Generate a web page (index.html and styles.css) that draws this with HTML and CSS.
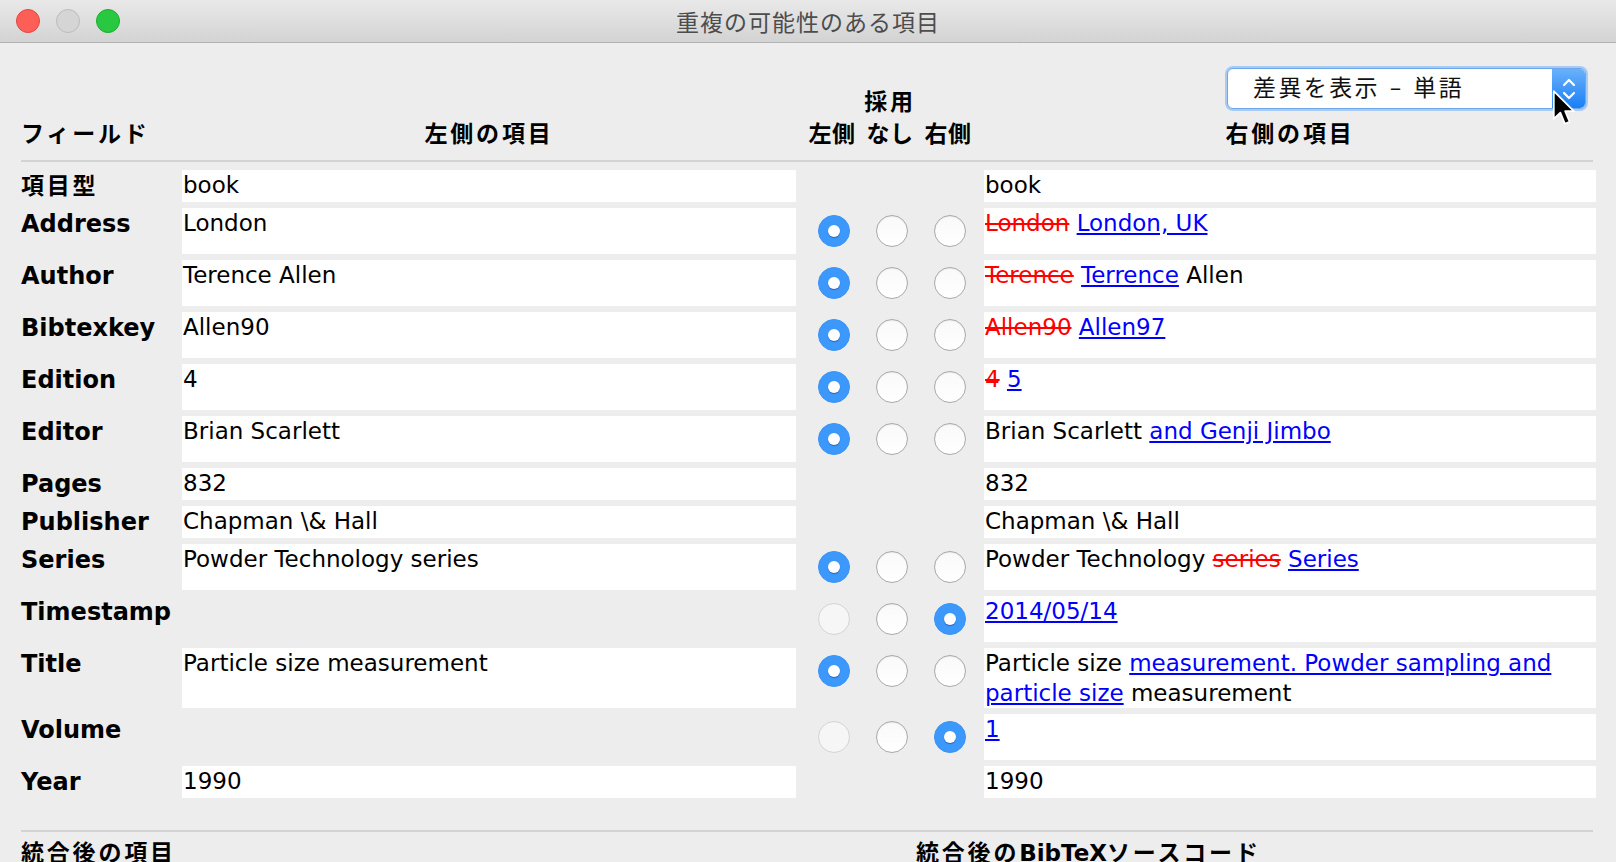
FILE: index.html
```html
<!DOCTYPE html>
<html lang="ja">
<head>
<meta charset="utf-8">
<title>重複の可能性のある項目</title>
<link rel="stylesheet" href="styles.css">
</head>
<body>
<header class="titlebar">
  <div class="lights"><span class="light red"></span><span class="light gray"></span><span class="light green"></span></div>
  <div class="title">重複の可能性のある項目</div>
  <div></div>
</header>
<main class="content">
  <div class="head">
    <div class="h-field jp">フィールド</div>
    <div class="h-left jp">左側の項目</div>
    <div class="h-use jp">
      <div class="h-use-top">採用</div>
      <div class="h-use-row"><span>左側</span><span>なし</span><span>右側</span></div>
    </div>
    <div class="h-right">
      <div class="combo">
        <div class="combo-text">差異を表示 – 単語</div>
        <div class="combo-btn">
          <svg width="16" height="26" viewBox="0 0 16 26"><path d="M3 9 L8 4 L13 9" fill="none" stroke="#fff" stroke-width="2.2" stroke-linecap="round" stroke-linejoin="round"/><path d="M3 17 L8 22 L13 17" fill="none" stroke="#fff" stroke-width="2.2" stroke-linecap="round" stroke-linejoin="round"/></svg>
        </div>
      </div>
      <div class="h-right-title jp">右側の項目</div>
    </div>
  </div>
  <div class="sep"></div>
  <div class="table">
    <div class="lbl jp">項目型</div><div class="val">book</div><div></div><div class="val">book</div>

    <div class="lbl">Address</div><div class="val">London</div>
    <div class="radios"><span class="r on"></span><span class="r"></span><span class="r"></span></div>
    <div class="val"><del>London</del> <ins>London, UK</ins></div>

    <div class="lbl">Author</div><div class="val">Terence Allen</div>
    <div class="radios"><span class="r on"></span><span class="r"></span><span class="r"></span></div>
    <div class="val"><del>Terence</del> <ins>Terrence</ins> Allen</div>

    <div class="lbl">Bibtexkey</div><div class="val">Allen90</div>
    <div class="radios"><span class="r on"></span><span class="r"></span><span class="r"></span></div>
    <div class="val"><del>Allen90</del> <ins>Allen97</ins></div>

    <div class="lbl">Edition</div><div class="val">4</div>
    <div class="radios"><span class="r on"></span><span class="r"></span><span class="r"></span></div>
    <div class="val"><del>4</del> <ins>5</ins></div>

    <div class="lbl">Editor</div><div class="val">Brian Scarlett</div>
    <div class="radios"><span class="r on"></span><span class="r"></span><span class="r"></span></div>
    <div class="val">Brian Scarlett <ins>and Genji Jimbo</ins></div>

    <div class="lbl">Pages</div><div class="val">832</div><div></div><div class="val">832</div>

    <div class="lbl">Publisher</div><div class="val">Chapman \&amp; Hall</div><div></div><div class="val">Chapman \&amp; Hall</div>

    <div class="lbl">Series</div><div class="val">Powder Technology series</div>
    <div class="radios"><span class="r on"></span><span class="r"></span><span class="r"></span></div>
    <div class="val">Powder Technology <del>series</del> <ins>Series</ins></div>

    <div class="lbl">Timestamp</div><div class="val empty"></div>
    <div class="radios"><span class="r dis"></span><span class="r"></span><span class="r on"></span></div>
    <div class="val"><ins>2014/05/14</ins></div>

    <div class="lbl">Title</div><div class="val">Particle size measurement</div>
    <div class="radios"><span class="r on"></span><span class="r"></span><span class="r"></span></div>
    <div class="val">Particle size <ins>measurement. Powder sampling and</ins> <ins>particle size</ins> measurement</div>

    <div class="lbl">Volume</div><div class="val empty"></div>
    <div class="radios"><span class="r dis"></span><span class="r"></span><span class="r on"></span></div>
    <div class="val"><ins>1</ins></div>

    <div class="lbl">Year</div><div class="val">1990</div><div></div><div class="val">1990</div>
  </div>
  <div class="sep bottom"></div>
  <div class="merged">
    <div class="m-title jp">統合後の項目</div>
    <div class="m-title jp">統合後の<span class="latin">BibTeX</span>ソースコード</div>
  </div>
</main>
<svg class="cursor" width="24" height="39" viewBox="0 0 13.5 21.5"><path d="M1 1 L1 16.6 L4.7 13.1 L7.2 19.3 L9.9 18.2 L7.4 12.2 L12.3 12.2 Z" fill="#000" stroke="#fff" stroke-width="1" stroke-linejoin="round"/></svg>
</body>
</html>
```

FILE: styles.css
```css
* { box-sizing: border-box; }
html, body { margin: 0; padding: 0; }
body {
  position: relative;
  width: 1616px;
  height: 862px;
  overflow: hidden;
  background: #ededed;
  font-family: "DejaVu Sans", "Noto Sans CJK JP", sans-serif;
  color: #000;
}
.titlebar {
  height: 43px;
  background: linear-gradient(#e9e9e9, #d3d3d3);
  border-bottom: 1px solid #b3b3b3;
  display: grid;
  grid-template-columns: 1fr auto 1fr;
  align-items: center;
}
.lights { display: flex; gap: 16px; padding-left: 16px; }
.light { width: 24px; height: 24px; border-radius: 50%; }
.red { background: #fd5f57; border: 1px solid #e1463f; }
.gray { background: #d5d5d5; border: 1px solid #bcbcbc; }
.green { background: #28c840; border: 1px solid #1dac2c; }
.title {
  font-family: "Noto Sans CJK JP", sans-serif;
  font-size: 23px;
  letter-spacing: 1px;
  color: #4d4d4d;
  line-height: 30px;
}
.content { padding: 0 20px 0 21px; }
.jp { letter-spacing: 2.8px; }
.latin { letter-spacing: 0; }
.head {
  display: grid;
  grid-template-columns: 161px 614px 188px 612px;
  align-items: end;
  font-weight: bold;
  font-size: 23px;
  line-height: 32px;
}
.h-left { text-align: center; }
.h-use-top { text-align: center; }
.h-use-row { display: flex; padding-left: 7px; }
.h-use-row span { width: 58px; text-align: center; letter-spacing: 0.5px; }
.h-right { display: flex; flex-direction: column; }
.h-right-title { text-align: center; margin-top: 9px; }
.combo {
  margin: 25px 10px 0 auto;
  width: 359px;
  height: 41px;
  display: flex;
  background: #fff;
  border: 1px solid #6fa6ea;
  border-radius: 6px;
  box-shadow: 0 0 0 2px #a8cbf4;
  font-weight: normal;
  overflow: hidden;
}
.combo-text {
  flex: 1;
  padding-left: 25px;
  font-size: 23px;
  line-height: 38px;
  letter-spacing: 2.4px;
  color: #111;
}
.combo-btn {
  width: 33px;
  background: linear-gradient(#69b1fb, #1a7ff6);
  display: flex;
  align-items: center;
  justify-content: center;
}
.sep { height: 2px; background: #d3d3d3; margin: 10px 3px 0 0; }
.sep.bottom { margin-top: 32px; }
.table {
  display: grid;
  grid-template-columns: 161px 614px 188px 612px;
  row-gap: 6px;
  margin-top: 8px;
  font-size: 23px;
  line-height: 30px;
}
.lbl { font-weight: bold; font-size: 24px; padding-top: 1px; }
.lbl.jp { font-size: 23px; letter-spacing: 2.8px; }
.val { background: #fff; min-height: 32px; padding-left: 1px; }
.val.empty { background: transparent; }
del { color: #ff0000; }
ins { color: #0000ff; }
.radios {
  height: 46px;
  display: flex;
  align-items: center;
  gap: 26px;
  padding-left: 22px;
}
.r {
  width: 32px;
  height: 32px;
  border-radius: 50%;
  background: linear-gradient(#f9f9f9, #ffffff);
  border: 1px solid #aaaaaa;
  box-shadow: inset 0 1px 1px rgba(0,0,0,0.06);
}
.r.on {
  background: #3d98fb;
  border-color: #3a94f6;
  box-shadow: none;
  display: flex;
  align-items: center;
  justify-content: center;
}
.r.on::after {
  content: "";
  width: 12px;
  height: 12px;
  border-radius: 50%;
  background: #fff;
  margin-top: -1px;
  box-shadow: 0 1px 1px rgba(0,40,130,0.45);
}
.r.dis { background: #f6f6f6; border-color: #d4d4d4; box-shadow: none; }
.merged {
  display: grid;
  grid-template-columns: 895px 1fr;
  margin-top: 5px;
  font-weight: bold;
  font-size: 23px;
  line-height: 32px;
}
.cursor { position: absolute; left: 1552px; top: 89px; }
```
